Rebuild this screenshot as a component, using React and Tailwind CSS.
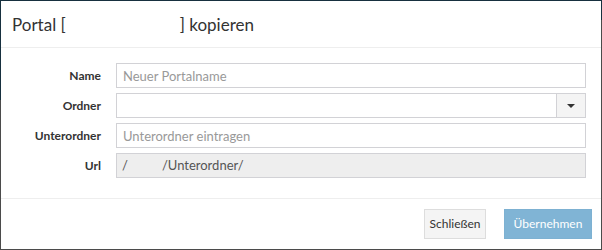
import { useState } from "react";

// Dialog: copy a portal
export default function App() {
  const [name, setName] = useState("");
  const [sub, setSub] = useState("");

  return (
    <div
      className="relative w-[602px] h-[250px] bg-[#4b4b4b] p-px overflow-hidden"
      style={{ fontFamily: "Lato, 'Noto Sans', sans-serif" }}
    >
      {/* dimmed page behind the modal */}
      <div className="absolute left-0 top-0 w-full h-[20px] bg-[#17303f]" />
      <div className="absolute left-0 top-0 w-[2px] h-[100px] bg-[#17303f]" />

      <div className="relative bg-white h-full flex flex-col">
        {/* header */}
        <div className="h-[47px] flex items-center px-[11px] border-b border-[#eeeeee]">
          <h4 className="text-[17px] text-[#333] leading-none">
            Portal [<span className="inline-block w-[114px]" />] kopieren
          </h4>
        </div>

        {/* body */}
        <div className="flex-1 flex flex-col gap-[5px] pt-[15px] px-[15px] text-[13px]">
          <div className="flex items-center">
            <label className="w-[100px] pr-[15px] text-right font-bold text-[12px] text-[#333]">Name</label>
            <input
              value={name}
              onChange={(e) => setName(e.target.value)}
              placeholder="Neuer Portalname"
              className="flex-1 h-[25px] border border-[#d2d2d6] px-[6px] text-[#555] placeholder-[#999] outline-none"
            />
          </div>

          <div className="flex items-center">
            <label className="w-[100px] pr-[15px] text-right font-bold text-[12px] text-[#333]">Ordner</label>
            <div className="flex-1 flex h-[25px] border border-[#d2d2d6]">
              <div className="flex-1" />
              <button className="w-[29px] border-l border-[#d2d2d6] bg-[#f4f4f4] flex items-center justify-center">
                <span className="w-0 h-0 border-l-[4px] border-r-[4px] border-t-[4px] border-l-transparent border-r-transparent border-t-[#333]" />
              </button>
            </div>
          </div>

          <div className="flex items-center">
            <label className="w-[100px] pr-[15px] text-right font-bold text-[12px] text-[#333]">Unterordner</label>
            <input
              value={sub}
              onChange={(e) => setSub(e.target.value)}
              placeholder="Unterordner eintragen"
              className="flex-1 h-[25px] border border-[#d2d2d6] px-[6px] text-[#555] placeholder-[#999] outline-none"
            />
          </div>

          <div className="flex items-center">
            <label className="w-[100px] pr-[15px] text-right font-bold text-[12px] text-[#333]">Url</label>
            <div className="flex-1 h-[25px] border border-[#d2d2d6] bg-[#eeeeee] px-[5px] flex items-center text-[#555]">
              /<span className="inline-block w-[34px]" />/Unterordner/
            </div>
          </div>
        </div>

        {/* footer */}
        <div className="h-[51px] border-t border-[#eeeeee] flex items-center justify-end gap-[18px] pr-[9px] text-[12px]">
          <button className="h-[30px] w-[62px] border border-[#dddddd] bg-[#f4f4f4] text-[#333]">
            Schließen
          </button>
          <button className="h-[30px] w-[88px] border border-[#7db1d2] bg-[#80b4d5] text-white">
            Übernehmen
          </button>
        </div>
      </div>
    </div>
  );
}
